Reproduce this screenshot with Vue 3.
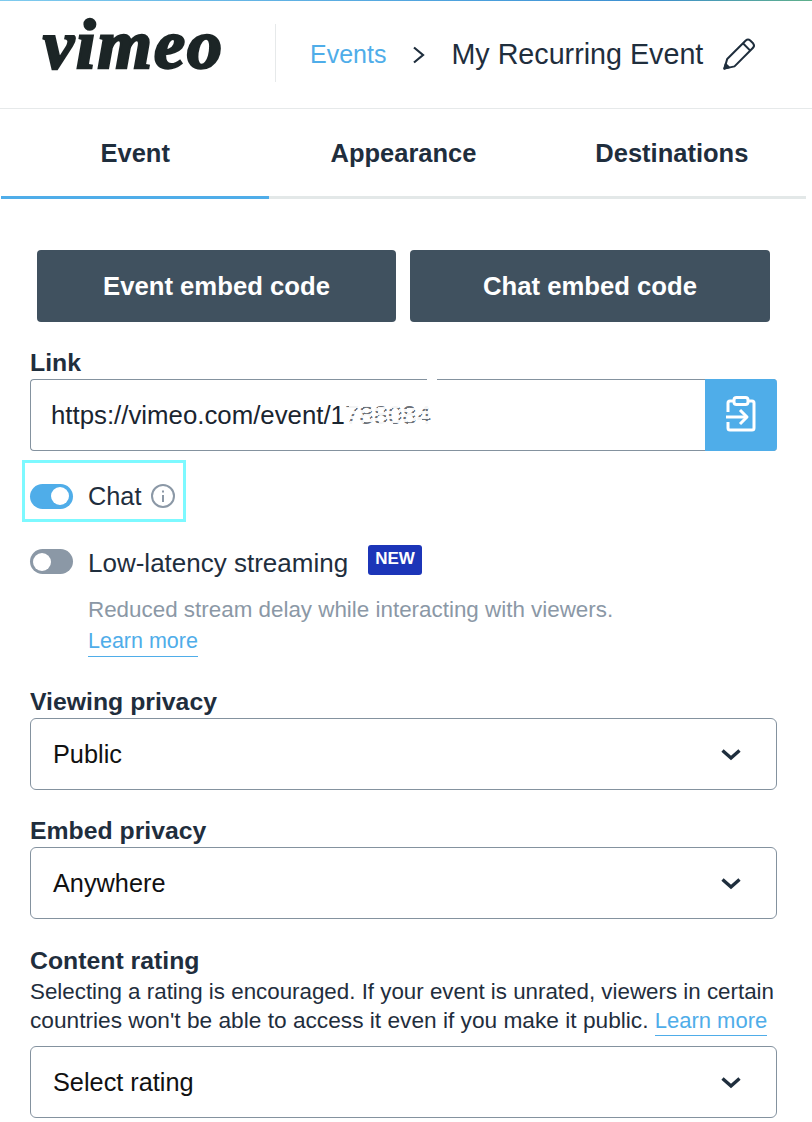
<template>
  <div class="page">
    <div class="top-line" />

    <!-- Header -->
    <header class="head">
      <span class="logo">vimeo</span>
      <span class="head-sep" />
      <a class="crumb">Events</a>
      <svg class="crumb-chev" width="14" height="18" viewBox="0 0 14 18" fill="none" stroke="#1f2e3d" stroke-width="2.2">
        <path d="M2 1.5 L11 9 L2 16.5" />
      </svg>
      <span class="title">My Recurring Event</span>
      <svg class="pencil" width="36" height="36" viewBox="0 0 32 32" fill="none" stroke="#1f2e3d" stroke-width="1.8" stroke-linejoin="round">
        <path d="M3 29 L5.5 20.5 L22 4 Q24 2.2 26 4 L28.5 6.5 Q30.2 8.5 28.5 10.5 L12 27 Z" />
        <path d="M19.5 6.5 L26 13" />
        <path d="M3 29 L4.2 25 L7 27.8 Z" fill="#1f2e3d" />
      </svg>
    </header>

    <!-- Tabs -->
    <nav class="tabs">
      <div
        v-for="t in tabs"
        :key="t"
        class="tab"
        :class="{ 'tab--on': t === 'Event' }"
      >{{ t }}</div>
    </nav>

    <main class="body">
      <div class="embed-row">
        <button class="embed-btn">Event embed code</button>
        <button class="embed-btn">Chat embed code</button>
      </div>

      <label class="label label--link">Link</label>
      <div class="link-box">
        <div class="link-text">https://vimeo.com/event/1<span class="smudge">788084</span></div>
        <span class="link-notch" />
        <div class="copy-btn">
          <svg width="32" height="38" viewBox="0 0 32 38" fill="none" stroke="#fff" stroke-width="3" stroke-linejoin="round">
            <path d="M9 6 H5 Q3 6 3 8 V17" />
            <path d="M23 6 H27 Q29 6 29 8 V33 Q29 35 27 35 H5 Q3 35 3 33 V27" />
            <rect x="9" y="2.5" width="14" height="7" rx="2.5" />
            <path d="M1 22 H22" />
            <path d="M15 15 L22 22 L15 29" />
          </svg>
        </div>
      </div>

      <div class="chat-focus">
        <span class="toggle toggle--on"><i /></span>
        <span class="toggle-label">Chat</span>
        <svg class="info" width="24" height="24" viewBox="0 0 24 24" fill="none" stroke="#8b98a6" stroke-width="2">
          <circle cx="12" cy="12" r="11" />
          <path d="M12 11 V18" />
          <path d="M12 6.5 V8.5" />
        </svg>
      </div>

      <div class="latency">
        <span class="toggle toggle--up"><i /></span>
        <span class="toggle-label toggle-label--wide">Low-latency streaming</span>
        <span class="badge">NEW</span>
      </div>
      <p class="hint">Reduced stream delay while interacting with viewers.</p>
      <a class="learn learn--hint">Learn more</a>

      <label class="label label--view">Viewing privacy</label>
      <div class="select select--view">
        <span>Public</span>
        <svg class="chev" width="20" height="12" viewBox="0 0 20 12" fill="none" stroke="#1f2e3d" stroke-width="3.4">
          <path d="M1.5 1.5 L10 9 L18.5 1.5" />
        </svg>
      </div>

      <label class="label label--embed">Embed privacy</label>
      <div class="select select--embed">
        <span>Anywhere</span>
        <svg class="chev" width="20" height="12" viewBox="0 0 20 12" fill="none" stroke="#1f2e3d" stroke-width="3.4">
          <path d="M1.5 1.5 L10 9 L18.5 1.5" />
        </svg>
      </div>

      <label class="label label--rating">Content rating</label>
      <p class="rating-text">
        Selecting a rating is encouraged. If your event is unrated, viewers in certain<br />
        <span class="rating-line">countries won't be able to access it even if you make it public.</span> <a class="learn">Learn more</a>
      </p>
      <div class="select select--rating">
        <span>Select rating</span>
        <svg class="chev" width="20" height="12" viewBox="0 0 20 12" fill="none" stroke="#1f2e3d" stroke-width="3.4">
          <path d="M1.5 1.5 L10 9 L18.5 1.5" />
        </svg>
      </div>
    </main>
  </div>
</template>

<script setup>
const tabs = ['Event', 'Appearance', 'Destinations']
</script>

<style>
html, body { background: #fff; }
</style>

<style scoped>
.page {
  width: 812px;
  height: 1122px;
  overflow: hidden;
  background: #fff;
  color: #1f2e3d;
  font-family: "Liberation Sans", Arial, sans-serif;
}

.top-line {
  height: 1px;
  background: linear-gradient(90deg, #7fcbee, #4a9fdc 60%, #3d8fd0 80%, #5fb08a);
}

/* ── Header ─────────────────────────────── */
.head {
  height: 107px;
  display: flex;
  align-items: center;
  border-bottom: 1px solid #e6e9ea;
}
.logo {
  width: 232px;
  margin-left: 43px;
  margin-top: -19px;
  font-family: "Liberation Serif", serif;
  font-weight: 700;
  font-style: italic;
  font-size: 70px;
  line-height: 70px;
  letter-spacing: 2px;
  color: #1c2526;
  -webkit-text-stroke: 2.5px #1c2526;
}
.head-sep {
  width: 1px;
  height: 58px;
  margin-top: -3px;
  background: #e6e9ea;
}
.crumb {
  margin-left: 34px;
  font-size: 25px;
  color: #4fade9;
}
.crumb-chev { margin-left: 26px; }
.title {
  margin-left: 25px;
  font-size: 28.7px;
  color: #1f2e3d;
}
.pencil { margin-left: 18px; margin-top: -2px; }

/* ── Tabs ───────────────────────────────── */
.tabs {
  display: flex;
  margin-left: 1px;
  width: 805px;
  height: 90px;
}
.tab {
  flex: 1;
  display: flex;
  align-items: center;
  justify-content: center;
  padding-top: 2px;
  border-bottom: 3px solid #e3e8e8;
  font-size: 25.5px;
  font-weight: 700;
  color: #1f2e3d;
}
.tab--on { border-bottom-color: #4fade9; }

/* ── Body ───────────────────────────────── */
.body { padding: 51px 35px 0 30px; }

.embed-row {
  display: grid;
  grid-template-columns: 359px 360px;
  gap: 14px;
  margin: 0 7px;
}
.embed-btn {
  height: 72px;
  border: 0;
  border-radius: 4px;
  background: #40515f;
  color: #fff;
  font: 700 25.7px "Liberation Sans", Arial, sans-serif;
}

.label {
  display: block;
  font-size: 24.8px;
  font-weight: 700;
  line-height: 30px;
  color: #1f2e3d;
}
.label--link { margin-top: 26px; }
.label--view { margin-top: 30px; }
.label--embed { margin-top: 26px; }
.label--rating { margin-top: 27px; }

.link-box {
  position: relative;
  box-sizing: border-box;
  display: flex;
  height: 72px;
  margin-top: 1px;
  border: 1px solid #84929f;
  border-right: 0;
  border-radius: 4px;
}
.link-text {
  flex: 1;
  padding-left: 20px;
  font-size: 25.8px;
  line-height: 70px;
  color: #1a2530;
}
/* the id is scratched out in the screenshot */
.smudge {
  position: relative;
  display: inline-block;
  line-height: 26px;
}
.smudge::after {
  content: "";
  position: absolute;
  inset: 0;
  background: repeating-linear-gradient(172deg, rgba(255, 255, 255, 0.95) 0 3px, rgba(255, 255, 255, 0.35) 3px 5px);
}
/* white smear that hides part of the top border */
.link-notch {
  position: absolute;
  top: -1px;
  left: 396px;
  width: 10px;
  height: 2px;
  background: #fff;
}
.copy-btn {
  width: 72px;
  margin: -1px 0;
  padding-bottom: 3px;
  box-sizing: border-box;
  display: flex;
  align-items: center;
  justify-content: center;
  border-radius: 0 4px 4px 0;
  background: #4fade9;
}

.chat-focus {
  display: flex;
  align-items: center;
  box-sizing: border-box;
  width: 164px;
  height: 62px;
  margin: 9px 0 0 -8px;
  padding: 10px 0 0 5px;
  border: 3px solid #7df9ff;
}
.toggle {
  flex: none;
  position: relative;
  width: 43px;
  height: 25px;
  border-radius: 13px;
  background: #8b98a6;
}
.toggle--up { margin-top: -3px; }
.toggle i {
  position: absolute;
  top: 3.5px;
  left: 3px;
  width: 18px;
  height: 18px;
  border-radius: 50%;
  background: #fff;
}
.toggle--on { background: #4fade9; }
.toggle--on i { left: 21px; }
.toggle-label {
  margin-left: 15px;
  font-size: 25.3px;
  color: #1f2e3d;
}
.toggle-label--wide { font-size: 26px; }
.info { margin-left: 10px; }

.latency {
  display: flex;
  align-items: center;
  height: 42px;
  margin-top: 20px;
}
.badge {
  margin: -6px 0 0 20px;
  padding: 0 7px;
  height: 30px;
  line-height: 28px;
  border-radius: 3px;
  background: #1c35b8;
  color: #fff;
  font-size: 17px;
  font-weight: 700;
}
.hint {
  margin: 13px 0 0 58px;
  font-size: 22.4px;
  line-height: 26px;
  color: #8b98a6;
}
.learn {
  color: #4fade9;
  border-bottom: 1px solid #4fade9;
  padding-bottom: 2px;
}
.learn--hint {
  display: inline-block;
  margin: 5px 0 0 58px;
  font-size: 21.5px;
  line-height: 26px;
}

.select {
  display: flex;
  align-items: center;
  justify-content: space-between;
  box-sizing: border-box;
  height: 72px;
  padding: 0 35px 0 22px;
  border: 1px solid #84929f;
  border-radius: 6px;
  font-size: 25.3px;
  color: #111;
}
.select--view { margin-top: 1px; }
.select--embed { margin-top: 1px; }
.select--rating { margin-top: 11px; }
.chev { margin-top: 1px; }

.rating-text {
  margin: 1px 0 0;
  font-size: 22.35px;
  line-height: 29px;
  color: #1f2e3d;
  white-space: nowrap;
}
.rating-line { font-size: 22.7px; }
.rating-text .learn { font-size: 22px; }
</style>
